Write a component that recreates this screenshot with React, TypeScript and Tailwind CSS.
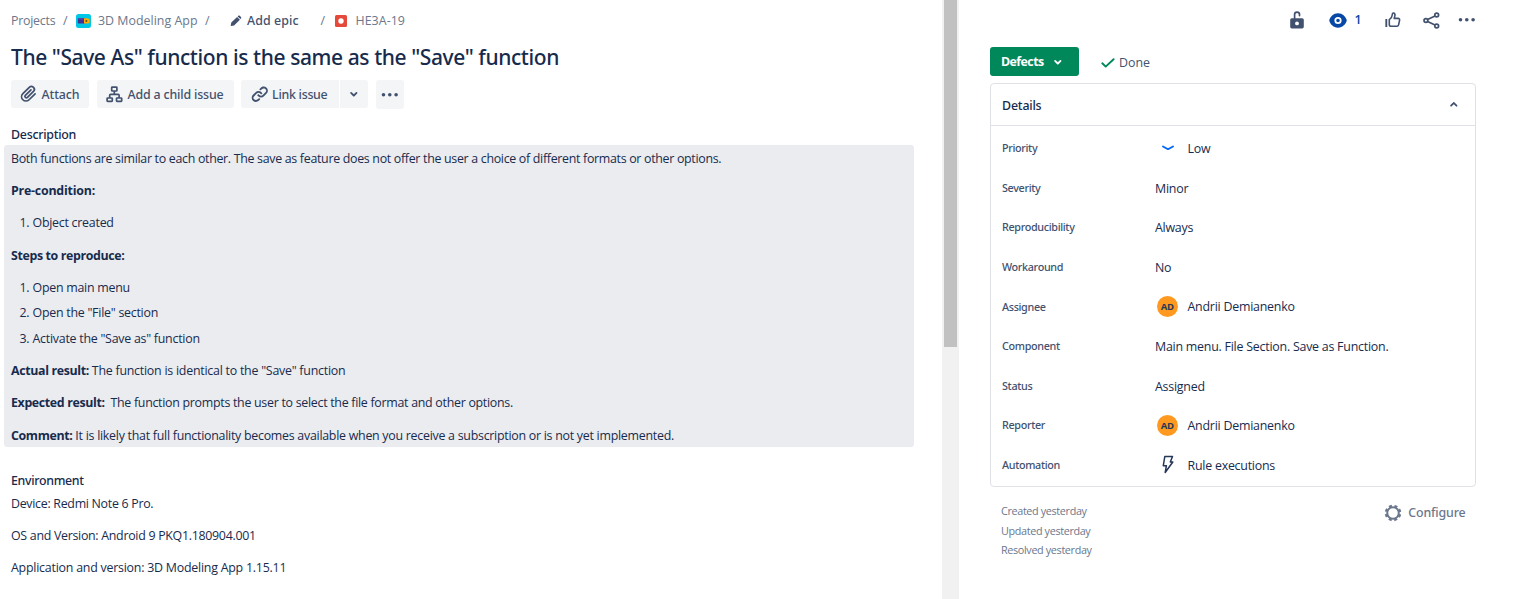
import type { ReactNode } from "react";

const med = "font-['Noto_Sans',sans-serif] font-medium";

type IconProps = { className?: string };

function Chevron({ className = "" }: IconProps) {
  return (
    <svg viewBox="0 0 24 24" fill="currentColor" className={className}>
      <path d="M8.292 10.293a1.009 1.009 0 000 1.419l2.939 2.965c.218.215.5.322.779.322s.556-.107.769-.322l2.93-2.955a1.01 1.01 0 000-1.419.987.987 0 00-1.406 0l-2.298 2.317-2.307-2.327a.99.99 0 00-1.406 0z" />
    </svg>
  );
}

function Dots({ className = "" }: IconProps) {
  return (
    <svg viewBox="0 0 24 24" fill="currentColor" className={className}>
      <circle cx="5" cy="12" r="2" />
      <circle cx="12" cy="12" r="2" />
      <circle cx="19" cy="12" r="2" />
    </svg>
  );
}

function ProjectLogo() {
  return (
    <svg viewBox="0 0 15 14" className="mb-px h-[14px] w-[15px]">
      <rect width="15" height="14" rx="2.5" fill="#00c7e6" />
      <rect x="1.8" y="4.2" width="8.2" height="5.4" rx="0.8" fill="#403294" />
      <rect x="1.8" y="4.2" width="8.2" height="1.6" rx="0.8" fill="#5243aa" />
      <path d="M8 4.2h3a2.7 2.7 0 0 1 0 5.4H8z" fill="#ffab00" />
      <circle cx="10.4" cy="6.9" r="1" fill="#5e4b2e" />
    </svg>
  );
}

function Pencil() {
  return (
    <svg viewBox="0 0 12 12" className="h-[12px] w-[12px]" fill="#42526e">
      <path d="M1.3 7.600 7.100 1.900l2.800 2.800-5.800 5.700-3.100.5c-.2 0-.3-.1-.3-.3zM7.600 1.400l.7-.6c.4-.4 1-.4 1.400 0l1.300 1.300c.4.4.4 1 0 1.400l-.6.6z" />
    </svg>
  );
}

function Attachment() {
  return (
    <svg viewBox="0 0 24 24" className="size-[21.6px]" fill="currentColor">
      <path d="M11.643 17.965c-1.53 1.495-4.016 1.496-5.542.004a3.773 3.773 0 01.002-5.412l7.147-6.985a2.316 2.316 0 013.233-.003c.893.873.895 2.282.004 3.153l-6.703 6.55a.653.653 0 01-.914-.008.62.62 0 010-.902l6.229-6.087a.941.941 0 000-1.353.995.995 0 00-1.384 0l-6.23 6.087a2.502 2.502 0 000 3.607 2.643 2.643 0 003.683.009l6.703-6.55a4.14 4.14 0 00-.004-5.858 4.306 4.306 0 00-6.009.003L4.71 11.2a5.622 5.622 0 00-.002 8.062 5.92 5.92 0 008.308-.003l6.698-6.545a.94.94 0 000-1.353.996.996 0 00-1.384 0z" />
    </svg>
  );
}

function ChildIssue() {
  return (
    <svg viewBox="0 0 17 17" className="size-[17px]" fill="none" stroke="currentColor" strokeWidth="1.7">
      <rect x="5.7" y="1.1" width="5.2" height="3.9" rx="0.6" />
      <rect x="1.1" y="12" width="5.2" height="3.4" rx="0.6" />
      <rect x="10.5" y="12" width="5.2" height="3.4" rx="0.6" />
      <path d="M8.3 5v3.4M3.7 12V9.3c0-.5.3-.9.9-.9h7.600c.5 0 .9.4.9.9V12" />
    </svg>
  );
}

function LinkIcon() {
  return (
    <svg viewBox="0 0 24 24" className="size-[21.6px]" fill="currentColor">
      <path d="M12.856 5.457l-.937.92a1.002 1.002 0 000 1.437 1.047 1.047 0 001.463 0l.984-.966c.967-.95 2.542-1.135 3.602-.288a2.54 2.54 0 01.203 3.81l-2.903 2.852a2.646 2.646 0 01-3.696 0l-1.11-1.09L9 13.57l1.108 1.089c1.822 1.788 4.802 1.788 6.622 0l2.905-2.852a4.558 4.558 0 00-.357-6.82c-1.893-1.517-4.695-1.226-6.422.47" />
      <path d="M11.144 19.543l.937-.92a1.002 1.002 0 000-1.437 1.047 1.047 0 00-1.462 0l-.985.966c-.967.95-2.542 1.135-3.602.288a2.54 2.54 0 01-.203-3.81l2.903-2.852a2.646 2.646 0 013.696 0l1.11 1.09L15 11.43l-1.108-1.089c-1.822-1.788-4.802-1.788-6.622 0l-2.905 2.852a4.558 4.558 0 00.357 6.82c1.893 1.517 4.695 1.226 6.422-.47" />
    </svg>
  );
}

function Unlock() {
  return (
    <svg viewBox="0 0 14 18" className="h-[18px] w-[14px]">
      <rect x="0.2" y="7.2" width="13.6" height="10.2" rx="1.6" fill="#42526e" />
      <path d="M4.6 7.5V3.600a2.4 2.4 0 0 1 4.9 0v1" fill="none" stroke="#42526e" strokeWidth="1.7" strokeLinecap="round" />
      <circle cx="7" cy="12.4" r="1.9" fill="#fff" />
    </svg>
  );
}

function Eye() {
  return (
    <svg viewBox="0 0 18 15" className="h-[15px] w-[18px]">
      <path d="M9 .3C4.3.3 1.7 3.6.5 6.4c-.3.7-.3 1.5 0 2.2C1.7 11.4 4.3 14.7 9 14.7s7.3-3.3 8.5-6.1c.3-.7.3-1.5 0-2.2C16.3 3.6 13.7.3 9 .3z" fill="#0747a6" />
      <circle cx="9" cy="7.5" r="2.7" fill="none" stroke="#fff" strokeWidth="1.8" />
    </svg>
  );
}

function ThumbUp() {
  return (
    <svg viewBox="0 0 16 16" className="size-[16px]" fill="none" stroke="#42526e" strokeWidth="1.6" strokeLinejoin="round">
      <path d="M1.3 7v8" strokeWidth="1.9" />
      <path d="M4.3 7.6c1.9-1.2 2.8-2.6 3-4.8.1-1.4.6-2 1.4-1.8 1.3.3 1.5 1.800 1.100 3.100l-.6 2.300h3.900c1.100 0 1.700.8 1.500 1.800l-1 4.600c-.2.9-.8 1.400-1.700 1.400H6.200c-1.100 0-1.900-.7-1.900-1.800z" />
    </svg>
  );
}

function Share() {
  return (
    <svg viewBox="0 0 17 17" className="size-[17px]" fill="none" stroke="#42526e" strokeWidth="1.7">
      <circle cx="2.9" cy="8.5" r="1.9" />
      <circle cx="13.7" cy="3" r="1.9" />
      <circle cx="13.7" cy="14" r="1.9" />
      <path d="M4.6 7.6 12 3.9M4.6 9.4 12 13.1" />
    </svg>
  );
}

function Gear() {
  return (
    <svg viewBox="0 0 18 18" className="size-[18px]" fill="none" stroke="#6b778c">
      <circle cx="9" cy="9" r="5.8" strokeWidth="2" />
      <circle cx="9" cy="9" r="7.2" strokeWidth="2.200" strokeDasharray="3 2.655" strokeDashoffset="-1.3" />
    </svg>
  );
}

function Bolt() {
  return (
    <svg viewBox="0 0 12 20" className="h-[20px] w-[12px]" fill="none" stroke="#253858" strokeWidth="1.5" strokeLinejoin="round">
      <path d="M2.8 1.500h7.700L8.300 7h2.500L3.200 17.500l1.200-6.800H1.300z" />
    </svg>
  );
}

function IssueHeader() {
  return (
    <>
      <nav className="flex h-[41px] items-center pt-px text-[12.4px] text-[#6b778c]">
        <span className="w-[52px] pt-px tracking-[-0.25px]">Projects</span>
        <span className="w-[13px] pt-px">/</span>
        <ProjectLogo />
        <span className="ml-[7px] w-[107px] pt-px tracking-[0.02px]">3D Modeling App</span>
        <span className="w-[25px] pt-px">/</span>
        <Pencil />
        <span className={`${med} ml-[5px] w-[73.5px] pt-px tracking-[0.1px] text-[#42526e]`}>Add epic</span>
        <span className="w-[14.5px] pt-px">/</span>
        <svg viewBox="0 0 12 12" className="mb-px size-[12px]">
          <rect width="12" height="12" rx="1.5" fill="#e5493a" />
          <circle cx="6" cy="6" r="2.7" fill="#fff" />
        </svg>
        <span className="ml-[8.5px] pt-px tracking-[0.05px]">HE3A-19</span>
      </nav>
      <h1 className={`${med} h-[39px] whitespace-nowrap text-[21px] leading-[33px] tracking-[-0.41px]`}>
        The "Save As" function is the same as the "Save" function
      </h1>
      <div className={`${med} flex h-[28px] text-[12.4px] text-[#42526e]`}>
        <button className="mr-[8px] flex w-[78px] items-center rounded-[3px] bg-[#f4f5f7] pl-[6.5px]">
          <Attachment />
          <span className="ml-[2.5px] pt-[2px] tracking-[-0.11px]">Attach</span>
        </button>
        <button className="mr-[7px] flex w-[137px] items-center whitespace-nowrap rounded-[3px] bg-[#f4f5f7] pl-[9px]">
          <ChildIssue />
          <span className="ml-[4.5px] pt-[2px] tracking-[-0.16px]">Add a child issue</span>
        </button>
        <button className="mr-px flex w-[98px] items-center whitespace-nowrap rounded-l-[3px] bg-[#f4f5f7] pl-[7.5px]">
          <LinkIcon />
          <span className="ml-[2px] pt-[2px] tracking-[-0.28px]">Link issue</span>
        </button>
        <button className="mr-[8px] flex w-[28px] items-center justify-center rounded-r-[3px] bg-[#f4f5f7]">
          <Chevron className="size-[21.6px]" />
        </button>
        <button className="flex h-[29px] w-[28px] items-center justify-center rounded-[3px] bg-[#f4f5f7]">
          <Dots className="size-[21.6px]" />
        </button>
      </div>
    </>
  );
}

function Steps({ items }: { items: string[] }) {
  return (
    <ol className="flex flex-col gap-[3.6px] tracking-[-0.25px]">
      {items.map((s, i) => (
        <li key={s} className="flex">
          <span className="w-[21.5px] pl-[8.5px]">{i + 1}.</span>
          <span>{s}</span>
        </li>
      ))}
    </ol>
  );
}

function Strong({ children }: { children: ReactNode }) {
  return <b className="font-bold tracking-[-0.36px]">{children}</b>;
}

function Description() {
  return (
    <>
      <h2 className={`${med} mt-[16px] h-[21px] text-[12.4px] leading-[22px] tracking-[-0.26px]`}>Description</h2>
      <div className="-ml-[7px] flex h-[302px] w-[910px] flex-col gap-[10.8px] whitespace-nowrap rounded-[3px] bg-[#ebecf0] pl-[7px] pt-[2.6px] text-[12.4px] leading-[21.6px] tracking-[-0.28px]">
        <p className="tracking-[-0.302px]">
          Both functions are similar to each other. The save as feature does not offer the user a choice of different
          formats or other options.
        </p>
        <p><b className="font-bold tracking-[-0.22px]">Pre-condition:</b></p>
        <Steps items={["Object created"]} />
        <p><Strong>Steps to reproduce:</Strong></p>
        <Steps items={["Open main menu", 'Open the "File" section', 'Activate the "Save as" function']} />
        <p className="tracking-[-0.24px]"><Strong>Actual result:</Strong> The function is identical to the "Save" function</p>
        <p><Strong>Expected result:</Strong>&nbsp; The function prompts the user to select the file format and other options.</p>
        <p className="tracking-[-0.262px]">
          <Strong>Comment:</Strong> It is likely that full functionality becomes available when you receive a
          subscription or is not yet implemented.
        </p>
      </div>
      <h2 className={`${med} mt-[23px] h-[22px] text-[12.4px] leading-[22px] tracking-[-0.32px]`}>Environment</h2>
      <div className="flex flex-col gap-[10.8px] pt-[0.6px] text-[12.4px] leading-[21.6px] tracking-[-0.29px]">
        <p>Device: Redmi Note 6 Pro.</p>
        <p>OS and Version: Android 9 PKQ1.180904.001</p>
        <p className="tracking-[-0.23px]">Application and version: 3D Modeling App 1.15.11</p>
      </div>
    </>
  );
}

function WithIcon({ icon, children }: { icon: ReactNode; children: ReactNode }) {
  return (
    <span className="flex items-center">
      <span className="flex w-[32.5px] items-center pl-[1.5px]">{icon}</span>
      <span className="pt-[3px]">{children}</span>
    </span>
  );
}

function Avatar() {
  return (
    <span className="mt-px flex size-[21.6px] items-center justify-center rounded-full bg-[#ff991f] text-[9.5px] font-bold leading-none tracking-[-0.2px] text-[#253858]">
      AD
    </span>
  );
}

const rows: [string, ReactNode][] = [
  [
    "Priority",
    <WithIcon
      icon={
        <svg viewBox="0 0 12 6" className="ml-[5px] mt-px h-[6px] w-[12px]" fill="none" stroke="#0065ff" strokeWidth="1.8" strokeLinecap="round" strokeLinejoin="round">
          <path d="M1 1.5 6 4.2l5-2.7" />
        </svg>
      }
    >
      Low
    </WithIcon>,
  ],
  ["Severity", <span className="block pt-[3px]">Minor</span>],
  ["Reproducibility", <span className="block pt-[2px]">Always</span>],
  ["Workaround", <span className="block pt-[3px]">No</span>],
  ["Assignee", <WithIcon icon={<Avatar />}>Andrii Demianenko</WithIcon>],
  ["Component", <span className="block pt-[3px]">Main menu. File Section. Save as Function.</span>],
  ["Status", <span className="block pt-[3px]">Assigned</span>],
  ["Reporter", <WithIcon icon={<Avatar />}>Andrii Demianenko</WithIcon>],
  ["Automation", <WithIcon icon={<span className="ml-[5px] mt-px"><Bolt /></span>}>Rule executions</WithIcon>],
];

function Sidebar() {
  return (
    <aside className="w-[562px] pl-[31px]">
      <div className="flex h-[47px] items-start pl-[300px] pt-[11px]">
        <div className="flex h-[18px] items-center">
          <Unlock />
          <span className="ml-[25px] flex"><Eye /></span>
          <span className="ml-[7.5px] w-[30.5px] pt-px text-[12.4px] font-semibold text-[#0747a6]">1</span>
          <ThumbUp />
          <span className="ml-[21.5px]"><Share /></span>
          <span className="ml-[16.5px] text-[#42526e]"><Dots className="size-[21.6px]" /></span>
        </div>
      </div>
      <div className="flex h-[36px]">
        <button className="flex h-[29px] w-[89px] items-center rounded-[3px] bg-[#00875a] pl-[11px] text-[12.4px] font-bold tracking-[-0.56px] text-white">
          <span className="pt-px">Defects</span>
          <Chevron className="ml-[3px] size-[21.6px]" />
        </button>
        <span className="ml-[22px] flex h-[31px] items-center text-[12.4px] text-[#42526e]">
          <svg viewBox="0 0 14 10" className="mr-[4px] h-[10px] w-[14px]" fill="none" stroke="#00875a" strokeWidth="1.9" strokeLinecap="round" strokeLinejoin="round">
            <path d="m1.3 5.3 3.4 3.3L12.6 1.2" />
          </svg>
          <span className="pt-[2px]">Done</span>
        </span>
      </div>
      <section className="h-[404px] w-[486px] rounded-[4px] border border-[#dfe1e6]">
        <header className="flex h-[42px] items-center justify-between border-b border-[#dfe1e6] pl-[11px] pr-[10.5px]">
          <h2 className={`${med} pt-[3.5px] text-[12.4px] tracking-[-0.18px]`}>Details</h2>
          <Chevron className="size-[21.6px] rotate-180 text-[#42526e]" />
        </header>
        <dl className="pt-[2px]">
          {rows.map(([label, value]) => (
            <div key={label} className="flex h-[39.6px] items-center pl-[11px]">
              <dt className={`${med} w-[153px] pt-px text-[10.8px] tracking-[-0.34px] text-[#42526e]`}>{label}</dt>
              <dd className="whitespace-nowrap text-[12.4px] tracking-[-0.23px]">{value}</dd>
            </div>
          ))}
        </dl>
      </section>
      <footer className="flex w-[486px] justify-between pl-[11px] pr-[10.5px] pt-[14px] text-[#6b778c]">
        <div className="text-[10.8px] leading-[19.7px] tracking-[-0.35px]">
          <p>Created yesterday</p>
          <p>Updated yesterday</p>
          <p>Resolved yesterday</p>
        </div>
        <button className={`${med} flex h-[23px] items-center text-[12.4px] tracking-[-0.15px]`}>
          <Gear />
          <span className="ml-[6px] pt-px">Configure</span>
        </button>
      </footer>
    </aside>
  );
}

export default function App() {
  return (
    <div className="flex h-[599px] w-[1521px] overflow-hidden bg-white font-['Open_Sans',sans-serif] text-[#172b4d]">
      <main className="w-[942px] pl-[11px]">
        <IssueHeader />
        <Description />
      </main>
      <div className="w-[17px] bg-[#f1f1f1] px-[2px]">
        <div className="h-[347px] bg-[#c1c1c1]" />
      </div>
      <Sidebar />
    </div>
  );
}
